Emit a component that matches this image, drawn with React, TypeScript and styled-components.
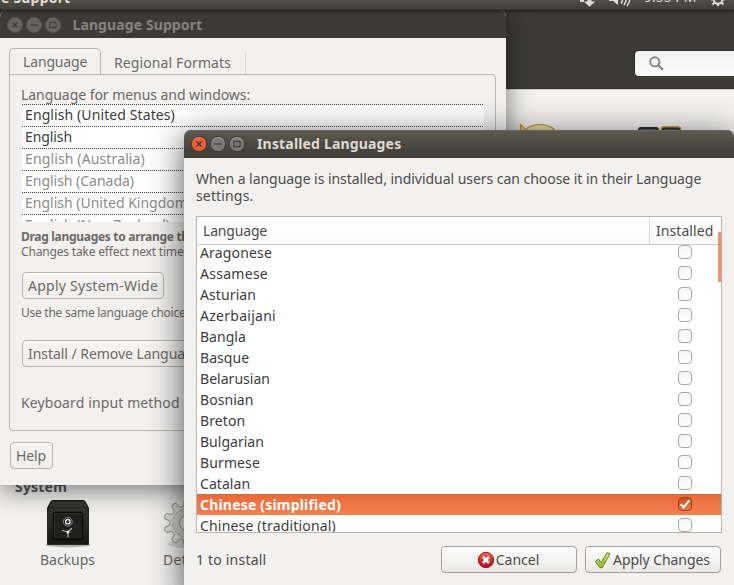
import React from 'react';
import styled, { createGlobalStyle, css } from 'styled-components';

const GlobalStyle = createGlobalStyle`
  * { box-sizing: border-box; }
  body { margin: 0; background: #f1f0ee; overflow: hidden; }
`;

const Desktop = styled.div`
  position: relative;
  width: 734px;
  height: 585px;
  overflow: hidden;
  font: 14px/20px 'Noto Sans', 'Open Sans', sans-serif;
  color: #4c4c4c;
  cursor: default;
`;

const Text = styled.span<{ $ls?: number }>`
  display: block;
  white-space: nowrap;
  letter-spacing: ${p => p.$ls ?? 0}px;
`;

const BoldText = styled(Text)`
  font-weight: 700;
`;

/* Top panel */
const Panel = styled.header`
  position: absolute;
  inset: 0 0 auto;
  z-index: 4;
  display: flex;
  justify-content: space-between;
  align-items: flex-end;
  height: 10px;
  overflow: hidden;
  color: #dfdbd2;
  background: linear-gradient(#504f49, #403f3a);
  border-bottom: 1px solid #35342f;
  box-shadow: 0 1px 4px rgba(0, 0, 0, 0.55);
`;
const PanelTitle = styled(BoldText)`
  margin: 0 0 1px 1px;
`;
const Indicators = styled.div`
  display: flex;
  align-items: flex-end;
  width: 166px;
  height: 20px;
  margin-right: -6px;
`;
const IndicatorIcon = styled.svg`
  width: 32px;
  height: 20px;
  flex: none;
`;
const Clock = styled(Text)`
  flex: none;
  width: 62px;
  padding-left: 6px;
  margin: 0 8px 2px 0;
`;

/* System settings window, behind everything */
const SettingsWindow = styled.section`
  display: flex;
  flex-direction: column;
  height: 585px;
  background: #f2f1f0;
`;
const SettingsHeader = styled.div`
  display: flex;
  justify-content: flex-end;
  align-items: flex-end;
  height: 89px;
  padding-bottom: 12px;
  background: #3c3b37;
  border-bottom: 1px solid #32312d;
`;
const SearchField = styled.div`
  display: flex;
  align-items: center;
  width: 99px;
  height: 25px;
  padding-left: 14px;
  border-radius: 4px 0 0 4px;
  background: linear-gradient(#f1f1f1, #fbfbfb);
  box-shadow: 0 0 0 1px #2d2c29, 0 2px 0 #4a4945;
`;
const SettingsBody = styled.div`
  flex: 1;
  display: flex;
  flex-direction: column;
  border-top: 1px solid #d3d1cd;
  padding-top: 32px;
`;
const UpperIcons = styled.div`
  display: flex;
  gap: 75px;
  height: 355px;
  padding-left: 515px;
`;
const SystemHeading = styled(BoldText)`
  padding-left: 15px;
  color: #555;
`;
const Tiles = styled.div`
  display: flex;
  padding: 0 0 0 8px;
`;
const Tile = styled.div`
  display: flex;
  flex-direction: column;
  align-items: center;
  width: 119px;
  padding-top: 2px;
  color: #666;
`;

/* Window chrome */
const TitleBar = styled.div<{ $active?: boolean }>`
  display: flex;
  align-items: center;
  gap: 3px;
  height: 28px;
  padding-left: ${p => (p.$active ? 7 : 6.5)}px;
  ${p => p.$active
    ? css`color: #dfdbd2; background: linear-gradient(#5d5a50, #48463f 60%, #3d3c37); border-radius: 7px 7px 0 0; box-shadow: inset 0 1px 0 #69665c;`
    : css`color: #85837b; background: #3c3b37; border-radius: 7px 7px 0 0; padding-top: 1px;`}
`;
const WindowTitle = styled(BoldText)`
  margin-left: 9px;
`;
const WindowIcon = styled.svg`
  width: 16px;
  height: 16px;
  flex: none;
`;

const LanguageWindow = styled.section`
  position: absolute;
  top: 10px;
  left: 0;
  z-index: 1;
  display: flex;
  flex-direction: column;
  width: 506px;
  height: 475px;
  background: #f2f1f0;
  color: #6c6a67;
  border-radius: 7px 7px 0 0;
  box-shadow: 0 5px 26px rgba(0, 0, 0, 0.5);
`;
const Tabs = styled.div`
  display: flex;
  align-items: flex-end;
  height: 36px;
  margin: 0 10px 0 9px;
`;
const Tab = styled.div<{ $active?: boolean }>`
  height: ${p => (p.$active ? 27 : 23)}px;
  ${p => p.$active
    ? css`
        width: 92px;
        padding: 3px 0 0 13px;
        margin-bottom: -1px;
        border: 1px solid #b9b7b4;
        border-bottom: 0;
        border-radius: 5px 5px 0 0;
        background: #f2f1f0;
      `
    : css`
        width: 145px;
        padding: 2px 0 0 13px;
        border-right: 1px solid #dcdad7;
      `}
`;
const TabPage = styled.div`
  display: flex;
  flex-direction: column;
  align-items: flex-start;
  width: 487px;
  height: 357px;
  margin-left: 9px;
  padding: 10px 12px;
  border: 1px solid #b9b7b4;
  border-radius: 0 4px 4px 4px;
`;
const ListLabel = styled(Text)`
  margin: 0 0 -1px -1px;
`;
const MenuList = styled.div`
  position: relative;
  width: 462px;
  height: 118px;
  overflow: hidden;
  background: #fff;
`;
const MenuItem = styled.div<{ $dim?: boolean }>`
  height: 22px;
  padding: 1px 0 0 3px;
  background: repeating-linear-gradient(90deg, #3c3c3c 0 1px, #fff 1px 2px) 0 0 / 100% 1px no-repeat;
  color: ${p => (p.$dim ? '#8b8b8b' : '#3c3c3c')};
`;
const SmallText = styled(Text)<{ $bold?: boolean }>`
  font-size: 12px;
  line-height: 15px;
  font-weight: ${p => (p.$bold ? 700 : 400)};
`;
const Hints = styled.div`
  padding-top: 7px;
  margin-left: -1px;
`;
const Button = styled.div<{ $w: number; $top?: number; $strong?: boolean }>`
  display: flex;
  justify-content: ${p => (p.$strong ? 'center' : 'flex-start')};
  align-items: center;
  gap: 1px;
  flex: none;
  width: ${p => p.$w}px;
  height: 27px;
  margin-top: ${p => p.$top ?? 0}px;
  padding: ${p => (p.$strong ? '0 2px 0 0' : '0 0 0 5px')};
  border: 1px solid ${p => (p.$strong ? '#a5a29e' : '#b8b6b3')};
  border-radius: 4px;
  background: ${p => (p.$strong ? 'linear-gradient(#fdfdfd, #e9e8e6)' : 'linear-gradient(#f6f5f4, #efeeec)')};
  box-shadow: inset 0 1px 0 #fff;
`;
const Spaced = styled.div<{ $top: number }>`
  margin: ${p => p.$top}px 0 0 -1px;
`;
const HelpRow = styled.div`
  padding: 11px 0 0 10px;
`;

/* Installed Languages dialog */
const Dialog = styled.section`
  position: absolute;
  top: 130px;
  left: 184px;
  z-index: 2;
  display: flex;
  flex-direction: column;
  width: 550px;
  height: 470px;
  background: #f2f1f0;
  border-radius: 7px 7px 0 0;
  box-shadow: 0 7px 34px rgba(0, 0, 0, 0.68);
`;
const Message = styled.div`
  height: 58px;
  padding: 12px 12px 0;
  line-height: 17px;
`;
const Table = styled.div`
  display: flex;
  flex-direction: column;
  position: relative;
  width: 526px;
  height: 317px;
  margin-left: 12px;
  border: 1px solid #b9b5b0;
  background: #fff;
  color: #3c3c3c;
`;
const TableHead = styled.div`
  display: grid;
  grid-template-columns: 453px 1fr;
  flex: none;
  height: 28px;
  border-bottom: 1px solid #d0cdca;
  background: linear-gradient(#fff, #f9f9f9);
  color: #4c4c4c;
`;
const HeadCell = styled.div<{ $line?: boolean }>`
  padding: 4px 0 0 6px;
  border-right: ${p => (p.$line ? '1px solid #dedcda' : '0')};
`;
const Rows = styled.div`
  flex: 1;
  overflow: hidden;
`;
const RowStack = styled.div`
  margin-top: -3px;
`;
const Row = styled.div<{ $selected?: boolean }>`
  display: grid;
  grid-template-columns: 478px 1fr;
  align-items: center;
  height: 21px;
  padding-left: 3px;
  ${p => p.$selected && css`
    color: #fff;
    font-weight: 700;
    background: linear-gradient(#e86a36, #f58152);
    box-shadow: inset 0 1px 0 #df6734;
  `}
`;
const Check = styled.div<{ $on?: boolean }>`
  display: grid;
  place-items: center;
  width: 14px;
  height: 14px;
  margin-top: -1px;
  border: 1px solid ${p => (p.$on ? '#a94319' : '#aaa8a6')};
  border-radius: 4px;
  background: ${p => (p.$on ? 'linear-gradient(#c94e20, #e97847)' : 'linear-gradient(#f5f5f5, #fff)')};
`;
const ScrollThumb = styled.div`
  position: absolute;
  top: 15px;
  right: 0;
  width: 3px;
  height: 50px;
  border-radius: 1px 0 0 1px;
  background: #f4906a;
`;
const Footer = styled.div`
  display: flex;
  align-items: center;
  height: 27px;
  margin: 13px 13px 0 12px;
  gap: 8px;
`;
const Status = styled(Text)`
  flex: 1;
`;

function WindowControl({ kind, active }: { kind: 'close' | 'min' | 'max'; active?: boolean }) {
  const fill = !active ? '#66645e' : kind === 'close' ? '#ea5d32' : '#7b7972';
  return (
    <WindowIcon viewBox="0 0 16 16" fill="none">
      <circle cx="8" cy="8" r="7.6" fill={fill} stroke={active ? '#35342f' : '#54534d'} strokeWidth=".8" />
      {active && <path d="M2 5.5a6.5 6.5 0 0 1 12 0" stroke="#fff" strokeOpacity=".28" />}
      <g stroke={active ? '#36352f' : '#3c3b37'} strokeWidth="1.1">
        {kind === 'close' && <path d="m5.5 5.5 5 5m0-5-5 5" />}
        {kind === 'min' && <path d="M4.5 8h7" />}
        {kind === 'max' && <path d="M5 5.2h6v5.6H5z" />}
      </g>
    </WindowIcon>
  );
}

const Controls = ({ active }: { active?: boolean }) => (
  <>
    <WindowControl kind="close" active={active} />
    <WindowControl kind="min" active={active} />
    <WindowControl kind="max" active={active} />
  </>
);

const SafeIcon = () => (
  <svg width="48" height="51" viewBox="0 1 48 51" fill="none">
    <defs>
      <linearGradient id="safe" x1="0" y1="0" x2="0" y2="1">
        <stop stopColor="#34352f" /><stop offset="1" stopColor="#161715" />
      </linearGradient>
    </defs>
    <ellipse cx="24" cy="47" rx="22" ry="2.2" fill="#000" opacity=".28" />
    <path d="M6.500 3.500Q7 2 9 2h30q2 0 2.500 1.500L45 10v35.500q0 1.500-1.500 1.500h-39Q3 47 3 45.500V10z" fill="#111210" />
    <path d="M8.300 3h31.800l3.500 7H4.800z" fill="#33362f" />
    <rect x="3.500" y="10" width="41" height="36.500" rx="1" fill="url(#safe)" stroke="#262824" />
    <rect x="9.500" y="14.500" width="29" height="27" rx="2" fill="#20211e" stroke="#0b0b0a" strokeWidth="1.300" />
    <path d="M10.500 40V15.500H38" stroke="#3f403b" strokeWidth=".6" />
    <circle cx="23.800" cy="23.700" r="4.400" fill="#151515" stroke="#8b8b88" strokeWidth="1" />
    <circle cx="23.800" cy="23.700" r="2.200" fill="#111" stroke="#eee" strokeWidth="1.300" />
    <path d="M24 34v5M24 34l-5.500-1.500M24 34l3.500-3.500" stroke="#b6b6b2" strokeWidth="1.200" strokeLinecap="round" />
    <circle cx="24" cy="34" r="1.500" fill="#f0f0ee" />
  </svg>
);

const gearTeeth = Array.from({ length: 10 }, (_, i) => {
  const point = (deg: number, r: number) => {
    const a = ((i * 36 + deg - 90) * Math.PI) / 180;
    return `${(24 + r * Math.cos(a)).toFixed(2)} ${(24 + r * Math.sin(a)).toFixed(2)}`;
  };
  return `${i ? 'L' : 'M'}${point(-11, 17.5)} L${point(-7, 22.5)} Q${point(0, 24.3)} ${point(7, 22.5)} L${point(11, 17.5)} Q${point(18, 16.3)} ${point(25, 17.5)}`;
}).join(' ') + 'Z';

const GearIcon = () => (
  <svg width="48" height="51" viewBox="0 0 48 51" fill="none" stroke="#8e8e8c">
    <ellipse cx="24" cy="45" rx="19" ry="4" fill="#000" opacity=".12" stroke="none" />
    <path d={gearTeeth} fill="#dededc" />
    <circle cx="24" cy="24" r="14.500" fill="#cfcfcd" stroke="#b2b2b0" />
    <circle cx="24" cy="24" r="7.500" fill="#e8e7e5" />
  </svg>
);

const languages: [string, number][] = [
  ['Aragonese', 0.16], ['Assamese', 0.28], ['Asturian', 0.1], ['Azerbaijani', 0.27],
  ['Bangla', 0.02], ['Basque', 0.05], ['Belarusian', 0.03], ['Bosnian', 0.05],
  ['Breton', 0.1], ['Bulgarian', 0.02], ['Burmese', 0.12], ['Catalan', 0.05],
  ['Chinese (simplified)', 0.19], ['Chinese (traditional)', 0.18],
];

const menuLanguages: [string, number, boolean][] = [
  ['English (United States)', 0.1, false],
  ['English', -0.09, false],
  ['English (Australia)', 0.13, true],
  ['English (Canada)', -0.02, true],
  ['English (United Kingdom)', 0, true],
  ['English (New Zealand)', 0, true],
];

export default function App() {
  return (
    <Desktop>
      <GlobalStyle />
      <Panel>
        <PanelTitle $ls={0.2}>e Support</PanelTitle>
        <Indicators>
          <IndicatorIcon viewBox="0 0 32 20">
            <path d="M6 7.500h4V13H6zM13.500 8h4v4.500h3.700l-5.700 5.200-5.700-5.200h3.700z" fill="#dfdbd2" />
          </IndicatorIcon>
          <IndicatorIcon viewBox="0 0 32 20" fill="none">
            <path d="M3 10h4l5-5v11l-5-4H3z" fill="#dfdbd2" />
            <path d="M16 8q1.500 3-1 6.500M19.500 6q2 5-1.500 10M23 4q2.500 7-2 13" stroke="#dfdbd2" strokeWidth="1.500" />
          </IndicatorIcon>
          <Clock $ls={-0.02}>9:55 PM</Clock>
          <IndicatorIcon viewBox="0 0 32 20" fill="none" stroke="#dfdbd2" strokeWidth="2">
            <circle cx="10" cy="10.500" r="4.200" />
            <path d="M10 14.500V17M6.500 13.500l-2 2M13.500 13.500l2 2M3 10.500h2.500M14.500 10.500H17M10 3.500v2.500" />
          </IndicatorIcon>
        </Indicators>
      </Panel>

      <SettingsWindow>
        <SettingsHeader>
          <SearchField>
            <svg width="15" height="15" viewBox="0 0 15 15" fill="none" stroke="#868686">
              <circle cx="5.800" cy="5.800" r="4.600" strokeWidth="1.900" />
              <path d="m9.300 9.300 4 4" strokeWidth="2.300" strokeLinecap="round" />
            </svg>
          </SearchField>
        </SettingsHeader>
        <SettingsBody>
          <UpperIcons>
            <svg width="48" height="40" viewBox="0 0 48 40">
              <path d="M5.500 20V2.500l5 5Q16 2.500 25 2.500q15 0 20 14v12z" fill="#e3d9a9" stroke="#c9981d" strokeWidth="1.200" />
            </svg>
            <svg width="48" height="40" viewBox="0 0 48 40">
              <rect x="1" y="6" width="19" height="19" rx="2" fill="#55595c" stroke="#2b2e30" strokeWidth="2" />
              <rect x="23.500" y="5" width="19" height="20" rx="2" fill="#3c4043" stroke="#c69122" strokeWidth="1.500" />
              <rect x="25" y="6.500" width="16" height="17" rx="1" fill="#565a5d" stroke="#303335" strokeWidth="1.500" />
            </svg>
          </UpperIcons>
          <SystemHeading $ls={0.2}>System</SystemHeading>
          <Tiles>
            <Tile><SafeIcon /><Text>Backups</Text></Tile>
            <Tile><GearIcon /><Text $ls={0.3}>Details</Text></Tile>
          </Tiles>
        </SettingsBody>
      </SettingsWindow>

      <LanguageWindow>
        <TitleBar>
          <Controls />
          <WindowTitle $ls={0.1}>Language Support</WindowTitle>
        </TitleBar>
        <Tabs>
          <Tab $active><Text $ls={-0.15}>Language</Text></Tab>
          <Tab><Text $ls={0.11}>Regional Formats</Text></Tab>
        </Tabs>
        <TabPage>
          <ListLabel $ls={-0.05}>Language for menus and windows:</ListLabel>
          <MenuList>
            {menuLanguages.map(([name, ls, dim]) => (
              <MenuItem key={name} $dim={dim}><Text $ls={ls}>{name}</Text></MenuItem>
            ))}
          </MenuList>
          <Hints>
            <SmallText $bold $ls={-0.3}>Drag languages to arrange them in order of preference.</SmallText>
            <SmallText $ls={-0.18}>Changes take effect next time you log in.</SmallText>
          </Hints>
          <Button $w={142} $top={13}><Text $ls={0.25}>Apply System-Wide</Text></Button>
          <Spaced $top={6}>
            <SmallText $ls={-0.26}>Use the same language choices for startup and the login screen.</SmallText>
          </Spaced>
          <Button $w={215} $top={20}><Text $ls={-0.05}>Install / Remove Languages...</Text></Button>
          <Spaced $top={26}><Text $ls={0.12}>Keyboard input method system:</Text></Spaced>
        </TabPage>
        <HelpRow><Button $w={43}><Text $ls={-0.1}>Help</Text></Button></HelpRow>
      </LanguageWindow>

      <Dialog>
        <TitleBar $active>
          <Controls active />
          <WindowTitle $ls={0.17}>Installed Languages</WindowTitle>
        </TitleBar>
        <Message>
          <Text $ls={-0.04}>When a language is installed, individual users can choose it in their Language</Text>
          <Text $ls={0.15}>settings.</Text>
        </Message>
        <Table>
          <TableHead>
            <HeadCell $line><Text $ls={-0.18}>Language</Text></HeadCell>
            <HeadCell><Text $ls={0.07}>Installed</Text></HeadCell>
          </TableHead>
          <Rows>
            <RowStack>
              {languages.map(([name, ls]) => {
                const on = name === 'Chinese (simplified)';
                return (
                  <Row key={name} $selected={on}>
                    <Text $ls={ls}>{name}</Text>
                    <Check $on={on}>
                      {on && (
                        <svg width="12" height="12" viewBox="0 0 12 12" fill="none" stroke="#fff" strokeWidth="2">
                          <path d="m1.700 6.200 3 3 5.800-7" />
                        </svg>
                      )}
                    </Check>
                  </Row>
                );
              })}
            </RowStack>
          </Rows>
          <ScrollThumb />
        </Table>
        <Footer>
          <Status $ls={0.2}>1 to install</Status>
          <Button $w={136} $strong>
            <svg width="18" height="18" viewBox="0 0 18 18" fill="none">
              <defs>
                <linearGradient id="cancel" x1="0" y1="0" x2="0" y2="1">
                  <stop stopColor="#f07663" /><stop offset=".5" stopColor="#d22b2f" /><stop offset="1" stopColor="#a80f2e" />
                </linearGradient>
              </defs>
              <circle cx="9" cy="9" r="7.700" fill="url(#cancel)" stroke="#a51c24" />
              <path d="m6 6 6 6m0-6-6 6" stroke="#fff" strokeWidth="2.500" />
            </svg>
            <Text>Cancel</Text>
          </Button>
          <Button $w={136} $strong>
            <svg width="18" height="18" viewBox="0 0 18 18">
              <defs>
                <linearGradient id="apply" x1="0" y1="0" x2="0" y2="1">
                  <stop stopColor="#d5e88d" /><stop offset="1" stopColor="#8cb92c" />
                </linearGradient>
              </defs>
              <path d="M1.300 10.300 4.400 8l2.700 3.600L13 1.700l3 1L8.300 16.700H6z" fill="url(#apply)" stroke="#5f8a1c" strokeLinejoin="round" />
            </svg>
            <Text $ls={-0.06}>Apply Changes</Text>
          </Button>
        </Footer>
      </Dialog>
    </Desktop>
  );
}
